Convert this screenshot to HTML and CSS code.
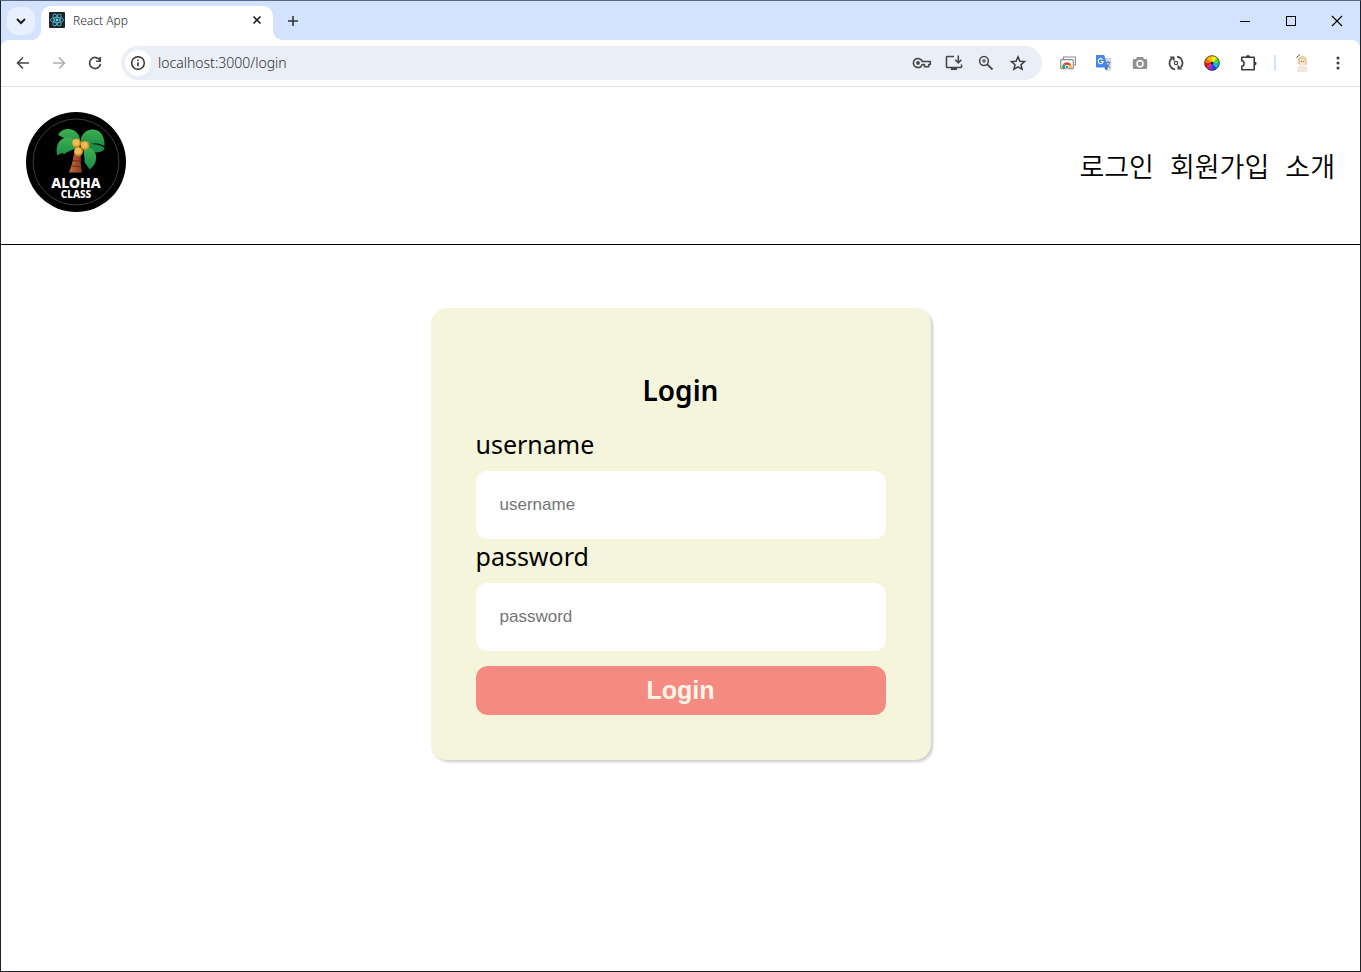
FILE: index.html
```html
<!DOCTYPE html>
<html lang="ko">
<head>
<meta charset="utf-8">
<meta name="viewport" content="width=device-width, initial-scale=1">
<title>React App</title>
<link rel="stylesheet" href="styles.css">
</head>
<body>
<div class="window">
  <div class="tabstrip">
    <button class="tab-search" aria-label="Search tabs"><svg width="10" height="10" viewBox="0 0 10 10"><path d="M1 3l4 4 4-4" fill="none" stroke="#1f1f1f" stroke-width="2"/></svg></button>
    <div class="tab">
      <svg class="favicon" width="16" height="16" viewBox="0 0 16 16">
        <rect width="16" height="16" rx="1" fill="#20232a"/>
        <g fill="none" stroke="#4fb3c9" stroke-width="0.9"><ellipse cx="8" cy="8" rx="6.6" ry="2.6"/><ellipse cx="8" cy="8" rx="6.6" ry="2.6" transform="rotate(60 8 8)"/><ellipse cx="8" cy="8" rx="6.6" ry="2.6" transform="rotate(120 8 8)"/></g>
        <circle cx="8" cy="8" r="1.4" fill="#61dafb"/>
      </svg>
      <span class="tab-title">React App</span>
      <button class="icon-button" aria-label="Close tab"><svg width="16" height="16" viewBox="0 0 16 16"><path d="M4.5 4.5l7 7M11.5 4.5l-7 7" stroke="#1f1f1f" stroke-width="1.6"/></svg></button>
    </div>
    <button class="icon-button new-tab" aria-label="New tab"><svg width="16" height="16" viewBox="0 0 16 16"><path d="M8 3v10M3 8h10" stroke="#333" stroke-width="1.6"/></svg></button>
    <div class="window-controls">
      <button aria-label="Minimize"><svg width="12" height="12" viewBox="0 0 12 12"><path d="M1 6.5h10" stroke="#000"/></svg></button>
      <button aria-label="Maximize"><svg width="12" height="12" viewBox="0 0 12 12"><rect x="1.5" y="1.5" width="9" height="9" fill="none" stroke="#000"/></svg></button>
      <button aria-label="Close"><svg width="12" height="12" viewBox="0 0 12 12"><path d="M1 1l10 10M11 1L1 11" stroke="#000" stroke-width="1.1"/></svg></button>
    </div>
  </div>

  <div class="toolbar">
    <div class="history">
      <button class="icon-button" aria-label="Back"><svg width="16" height="16" viewBox="0 0 16 16"><path d="M14 8H3M8 2.500L2.500 8 8 13.500" fill="none" stroke="#474747" stroke-width="1.6"/></svg></button>
      <button class="icon-button" aria-label="Forward"><svg width="16" height="16" viewBox="0 0 16 16"><path d="M2 8h11M8 2.500L13.500 8 8 13.500" fill="none" stroke="#adadad" stroke-width="1.6"/></svg></button>
      <button class="icon-button" aria-label="Reload"><svg width="16" height="16" viewBox="0 0 16 16"><path d="M13 5.500A5.500 5.500 0 1 0 13.500 9" fill="none" stroke="#474747" stroke-width="1.7"/><path d="M14 2v5H9V5.400h3.400V2z" fill="#474747"/></svg></button>
    </div>
    <div class="omnibox">
      <button class="site-info" aria-label="Site information"><svg width="16" height="16" viewBox="0 0 16 16"><circle cx="8" cy="8" r="6.300" fill="none" stroke="#303030" stroke-width="1.500"/><path d="M8 7.200v4M8 4.400v1.600" stroke="#303030" stroke-width="1.600"/></svg></button>
      <input class="address" type="text" value="localhost:3000/login" aria-label="Address">
      <div class="page-actions">
        <button class="icon-button" aria-label="Passwords"><svg width="20" height="16" viewBox="0 0 20 16"><path d="M6 3.500a4.500 4.500 0 1 0 4.200 6h2.300v2.200h4.200V9.500h1.600v-3h-8.100A4.500 4.500 0 0 0 6 3.500z" fill="none" stroke="#474747" stroke-width="1.600" stroke-linejoin="round"/><circle cx="6" cy="8" r="1.900" fill="#474747"/></svg></button>
        <button class="icon-button" aria-label="Install app"><svg width="18" height="18" viewBox="0 0 18 18"><path d="M9 2.500H2.200a.7.700 0 0 0-.7.700v9.600c0 .4.300.7.700.7h13.600c.4 0 .7-.3.700-.7V10.500" fill="none" stroke="#474747" stroke-width="1.600"/><path d="M6 13.500h6V16H6z" fill="#474747"/><path d="M13.300 1.500v7M10.200 5.800l3.100 3.100 3.100-3.100" fill="none" stroke="#474747" stroke-width="1.600"/></svg></button>
        <button class="icon-button" aria-label="Zoom"><svg width="16" height="16" viewBox="0 0 16 16"><circle cx="6" cy="6" r="4.400" fill="none" stroke="#474747" stroke-width="1.500"/><path d="M9.300 9.300L14.500 14.500" stroke="#474747" stroke-width="1.800"/><path d="M6 4v4M4 6h4" stroke="#474747" stroke-width="1.200"/></svg></button>
        <button class="icon-button" aria-label="Bookmark"><svg width="18" height="18" viewBox="0 0 18 18"><path d="M9 2.800l1.900 4.400 4.600.4-3.500 3.100 1.100 4.600L9 12.900l-4.100 2.400L6 10.700 2.500 7.600l4.600-.4z" fill="none" stroke="#3c3c3c" stroke-width="1.500"/></svg></button>
      </div>
    </div>
    <div class="extensions">
      <button class="icon-button" aria-label="Cast page"><svg width="16" height="16" viewBox="0 0 16 16"><path d="M3.500 4V2h12v8h-2" fill="none" stroke="#8a8a8a" stroke-width="1.200"/><rect x=".7" y="4.700" width="12.600" height="9" rx="1" fill="#fff" stroke="#8a8a8a" stroke-width="1.200"/><path d="M2.300 13.200a4.700 4.700 0 0 1 1.500-4.700L6 11.200v2z" fill="#2ca94f"/><path d="M2.900 9.600a4.700 4.700 0 0 1 8.400.4H7z" fill="#e34133"/><path d="M8.500 10h2.900c.4 1 .4 2.200.1 3.200h-3z" fill="#f9bd15"/><circle cx="7" cy="12" r="1.700" fill="#3f7fea" stroke="#fff" stroke-width=".7"/></svg></button>
      <button class="icon-button" aria-label="Translate"><svg width="16" height="16" viewBox="0 0 16 16"><path d="M6 3h9.300v12.500H10z" fill="#d6d9de"/><path d="M9.500 7.500h5M12 6v1.500M10.200 12.500c2-1 3-3 3.200-5M10.500 8.500c.7 2 2 3.200 3.700 4" fill="none" stroke="#607d8b"/><path d="M0 0h8.200l3.800 12.500H.7A.7.700 0 0 1 0 11.800z" fill="#4585ee"/><path d="M8.500 12.500H12L10 15.500z" fill="#2958b5"/><path d="M6.600 4.500A2.500 2.500 0 1 0 7.200 6.500H4.900" fill="none" stroke="#fff" stroke-width="1.100"/></svg></button>
      <button class="icon-button" aria-label="Screenshot"><svg width="16" height="16" viewBox="0 0 16 16"><path d="M1.700 4H4l1-2h6l1 2h2.300c.5 0 .9.400.9.900v8.200c0 .5-.4.900-.9.900H1.700a.9.900 0 0 1-.9-.9V4.900c0-.5.400-.9.900-.9z" fill="#929292"/><circle cx="8" cy="8.700" r="3" fill="#929292" stroke="#fff" stroke-width="1.500"/></svg></button>
      <button class="icon-button" aria-label="Live reload"><svg width="16" height="16" viewBox="0 0 16 16"><path d="M7 14.300A6.300 6.300 0 0 1 3.500 3.500M9 1.700a6.300 6.300 0 0 1 3.500 10.800" fill="none" stroke="#484848" stroke-width="1.800"/><path d="M1.500 1.500h5v5zM14.500 14.500h-5v-5z" fill="#484848"/><circle cx="8" cy="8" r="1.700" fill="none" stroke="#484848" stroke-width="1.200"/></svg></button>
      <button class="icon-button" aria-label="Color picker"><svg width="16" height="16" viewBox="0 0 16 16"><path d="M8 8L8 .5A7.500 7.500 0 0 1 13.300 2.700z" fill="#fff200"/><path d="M8 8L13.300 2.700A7.500 7.500 0 0 1 15.500 8z" fill="#52dc2b"/><path d="M8 8L15.500 8A7.500 7.500 0 0 1 13.300 13.300z" fill="#13b9e9"/><path d="M8 8L13.300 13.300A7.500 7.500 0 0 1 8 15.500z" fill="#1c49ec"/><path d="M8 8L8 15.500A7.500 7.500 0 0 1 2.700 13.300z" fill="#a72bc7"/><path d="M8 8L2.700 13.300A7.500 7.500 0 0 1 .5 8z" fill="#ee1717"/><path d="M8 8L.5 8A7.500 7.500 0 0 1 2.700 2.700z" fill="#ff7200"/><path d="M8 8L2.700 2.700A7.500 7.500 0 0 1 8 .5z" fill="#ffc000"/><circle cx="8" cy="8" r="7.300" fill="none" stroke="#222" stroke-width=".8"/><circle cx="8" cy="8" r="1.500" fill="#222"/></svg></button>
      <button class="icon-button" aria-label="Extensions"><svg width="18" height="18" viewBox="0 0 18 18"><path d="M2.800 3.300h12.400v12.400H2.800v-3.400c3-.4 3-5.200 0-5.600z" fill="none" stroke="#3c3c3c" stroke-width="1.600" stroke-linejoin="round"/><path d="M6.900 3a2.100 2.100 0 0 1 4.200 0zM15.500 7.400a2.100 2.100 0 0 1 0 4.200z" fill="#3c3c3c"/></svg></button>
      <span class="divider"></span>
      <button class="icon-button" aria-label="Profile"><svg width="20" height="20" viewBox="0 0 20 20"><path d="M5 19c0-5 1-6 3.500-6.500h4C15 13 15.500 15 15.500 19z" fill="#f2e8e3"/><path d="M6 11c-1-5 1-8 4.500-8S16 7 14.500 12h-2V9h-4v3z" fill="#e8cd98"/><ellipse cx="10.500" cy="8.800" rx="2.500" ry="3.400" fill="#fae3d6"/><path d="M9 8.500h1M11.200 8.500h1" stroke="#8d665c"/><path d="M4.500 4.500L8 1.500" stroke="#555"/></svg></button>
      <button class="icon-button" aria-label="Menu"><svg width="16" height="16" viewBox="0 0 16 16"><g fill="#3c3c3c"><circle cx="8" cy="3" r="1.500"/><circle cx="8" cy="8" r="1.500"/><circle cx="8" cy="13" r="1.500"/></g></svg></button>
    </div>
  </div>

  <header class="site-header">
    <a class="logo" href="/" aria-label="Aloha Class">
      <svg width="100" height="100" viewBox="0 0 100 100">
        <defs>
          <linearGradient id="leaf" x1="0" y1="0" x2="0" y2="1"><stop offset="0" stop-color="#3fb04f"/><stop offset="1" stop-color="#1c8c49"/></linearGradient>
          <linearGradient id="trunk" x1="0" y1="0" x2="1" y2="0"><stop offset="0" stop-color="#c26c3b"/><stop offset="1" stop-color="#8e3b22"/></linearGradient>
        </defs>
        <circle cx="50" cy="50" r="50" fill="#000"/>
        <circle cx="50" cy="50" r="43" fill="none" stroke="#777" stroke-width=".5"/>
        <path d="M48 41c-1 8-2.500 13-5 19.500h13c-1.500-6-1.500-12-1-19.500z" fill="url(#trunk)"/>
        <path d="M47 48.500l8 .8M45.500 54l10 .8" stroke="#612918" stroke-width=".9"/>
        <path d="M54 34C56 24 50 17 42 17c-5 0-8 2.500-10 6l8 4c5 1 9 4 14 7z" fill="url(#leaf)"/>
        <path d="M54 32c-4-6-12-8-17-5.500-5.500 3-7.500 9-5.800 17l4.300-2.500 3 1c4-3 8-4 14-7z" fill="url(#leaf)"/>
        <path d="M56 34c-4-9 3-17 11.500-16.500C75 18 79 25 78.500 34l-5-2c-6-1-11 0-16.500 2z" fill="url(#leaf)"/>
        <path d="M57 33c8-2 15-1 18.500 1 2.500 1 3.300 2.500 2.800 3.500-3 3-8 3.500-12 2.500-4-1-6-3-9.300-7z" fill="#1c8c49"/>
        <path d="M57 35c10-1 14 6 13 12-.5 5-3 8-6.500 10.500-2-4-4-5-5-8 0-5-.5-9-1.500-14.500z" fill="url(#leaf)"/>
        <g fill="#d29427"><circle cx="50.500" cy="31" r="4.500"/><circle cx="59" cy="33.500" r="4.500"/><circle cx="52.500" cy="39.500" r="4.500"/></g>
        <g fill="#efbd55"><circle cx="50" cy="30.500" r="3.300"/><circle cx="58.500" cy="33" r="3.300"/><circle cx="52" cy="39" r="3.300"/></g>
        <text class="logo-name" x="50" y="76" text-anchor="middle">ALOHA</text>
        <text class="logo-sub" x="50" y="86" text-anchor="middle">CLASS</text>
      </svg>
    </a>
    <nav class="site-nav"><a href="/login">로그인</a><a href="/join">회원가입</a><a href="/about">소개</a></nav>
  </header>

  <main class="content">
    <form class="login-card">
      <h1>Login</h1>
      <label for="username">username</label>
      <input id="username" type="text" placeholder="username">
      <label for="password">password</label>
      <input id="password" type="password" placeholder="password">
      <button class="submit" type="submit">Login</button>
    </form>
  </main>
</div>
</body>
</html>
```
FILE: styles.css
```css
* { box-sizing: border-box; }
body { margin: 0; background: #fff; color: #000; font-family: "Noto Sans", "Noto Sans CJK KR", sans-serif; }
button { border: 0; padding: 0; background: none; font: inherit; }
svg { display: block; flex: none; }

.window { display: flex; flex-direction: column; min-height: 100vh; border: 1px solid #202124; border-top-color: #59678a; }

.tabstrip { display: flex; align-items: center; height: 39px; padding-left: 6px; background: #d3e2fd; }
.tab-search { display: grid; place-items: center; width: 28px; height: 28px; border-radius: 10px; background: #e8f0fe; }
.tab { position: relative; display: flex; align-items: center; align-self: flex-end; width: 232px; height: 34px; margin-left: 6px; padding: 0 8px 6px; border-radius: 10px 10px 0 0; background: #fff; }
.tab::before, .tab::after { content: ""; position: absolute; bottom: 0; width: 10px; height: 10px; }
.tab::before { right: 100%; background: radial-gradient(circle at 0 0, transparent 10px, #fff 10px); }
.tab::after { left: 100%; background: radial-gradient(circle at 100% 0, transparent 10px, #fff 10px); }
.tab-title { flex: 1; padding: 2px 0 0 8px; color: #1f1f1f; font-size: 12px; font-weight: 300; line-height: 16px; }
.icon-button { display: grid; place-items: center; width: 20px; height: 20px; }
.tab .icon-button { width: 16px; }
.new-tab { margin-left: 10px; }
.window-controls { display: flex; margin-left: auto; }
.window-controls button { display: grid; place-items: center; width: 46px; height: 38px; }

.toolbar { display: flex; align-items: center; height: 47px; padding: 0 12px; border-bottom: 1px solid #dedede; background: linear-gradient(#d3e2fd, #d3e2fd) top / 100% 10px no-repeat; position: relative; z-index: 0; }
.toolbar::before { content: ""; position: absolute; z-index: -1; inset: 0; border-radius: 8px 8px 0 0; background: #fff; }
.history { display: flex; gap: 16px; }
.omnibox { display: flex; flex: 1; align-items: center; height: 34px; margin-left: 16px; padding: 0 14px 0 4px; border-radius: 17px; background: #eaeef6; }
.site-info { display: grid; place-items: center; width: 26px; height: 26px; border-radius: 50%; background: #fff; }
.address { flex: 1; min-width: 0; margin-left: 7px; padding: 0; border: 0; outline: 0; background: none; color: #303030; font: 300 14px/20px "Noto Sans", sans-serif; }
.page-actions { display: flex; gap: 12px; }
.extensions { display: flex; align-items: center; gap: 16px; margin-left: 16px; }
.divider { width: 2px; height: 16px; background: #d3e2fd; }

.site-header { display: flex; align-items: center; justify-content: space-between; padding: 25px 25px 32px; border-bottom: 1px solid #000; }
.logo-name, .logo-sub { fill: #fff; font-family: "Noto Sans", sans-serif; font-weight: 800; }
.logo-name { font-size: 14px; }
.logo-sub { font-size: 10px; }
.site-nav { display: flex; gap: 16px; padding-top: 8px; font-family: "Noto Sans CJK KR", sans-serif; font-size: 27px; font-weight: 350; line-height: 36px; }
.site-nav a { color: #000; text-decoration: none; }

.content { display: flex; justify-content: center; padding: 63px 24px; }
.login-card { display: flex; flex-direction: column; width: 500px; padding: 45px; border-radius: 16px; background: #f5f5dc; box-shadow: 2px 2px 3px rgba(0, 0, 0, .2); }
.login-card h1 { margin: 16px 0; font-size: 28px; font-weight: 600; line-height: 42px; text-align: center; }
.login-card label { font-size: 25px; line-height: 34px; padding-bottom: 10px; }
.login-card input { width: 100%; height: 68px; padding: 0 24px; border: 0; border-radius: 12px; background: #fff; font: 17px "Liberation Sans", Arial, sans-serif; }
.login-card input::placeholder { color: #757575; }
.submit { height: 49px; margin-top: 15px; border-radius: 12px; background: #f58a82; color: #fff5e6; font: bold 25px "Liberation Sans", Arial, sans-serif; }
```
